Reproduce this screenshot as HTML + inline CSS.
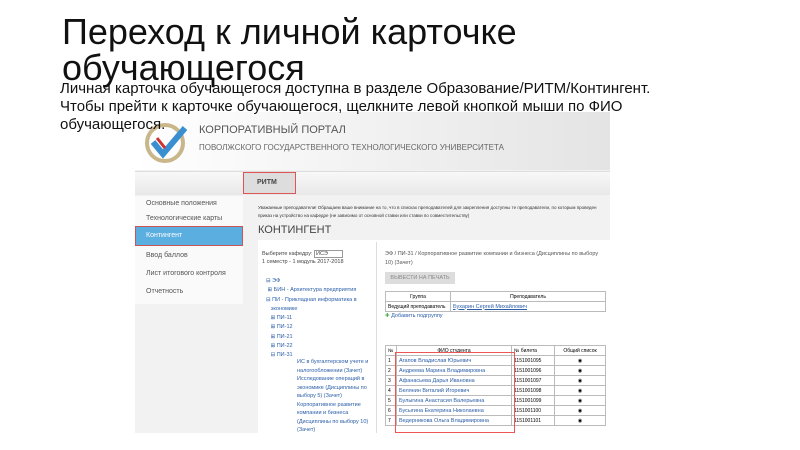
<!DOCTYPE html><html><head><meta charset="utf-8"><style>
body{margin:0;width:800px;height:450px;background:#fff;position:relative;overflow:hidden;font-family:"Liberation Sans",sans-serif}
.a{position:absolute}
.t{font-size:36px;color:#111;line-height:36px;left:62px;top:14px}
.p{font-size:15px;color:#111;line-height:18px;left:60px;top:80px;z-index:2}
.s{font-size:7px;color:#555}
.l{color:#2a5ea8;font-size:5.5px}
table{border-collapse:collapse;font-size:5px}
td{border:1px solid #bbb;height:9px;padding:0 2px;white-space:nowrap}
</style></head><body>
<div class="a" style="left:135px;top:112px;width:475px;height:321px;background:#f2f2f2"></div>
<div class="a" style="left:135px;top:112px;width:475px;height:58px;background:linear-gradient(90deg,#fff,#e4e4e4)"></div>
<svg class="a" style="left:143px;top:120px" width="46" height="46"><circle cx="22" cy="23" r="18" fill="none" stroke="#c9b68a" stroke-width="4"/><path d="M10 22 L20 34 L42 8" fill="none" stroke="#3a8fd0" stroke-width="6"/><path d="M14 18 L22 28" stroke="#c33" stroke-width="3"/></svg>
<div class="a" style="left:199px;top:124px;font-size:11px;color:#555">КОРПОРАТИВНЫЙ ПОРТАЛ</div>
<div class="a" style="left:199px;top:143px;font-size:8px;color:#666">ПОВОЛЖСКОГО ГОСУДАРСТВЕННОГО ТЕХНОЛОГИЧЕСКОГО УНИВЕРСИТЕТА</div>
<div class="a" style="left:135px;top:171px;width:475px;height:23px;background:linear-gradient(#f8f8f8,#e8e8e8);border-top:1px solid #ddd"></div>
<div class="a" style="left:243px;top:172px;width:51px;height:20px;background:#ddd;border:1px solid #d55;font-size:7px;font-weight:bold;color:#444;line-height:20px;text-indent:13px">РИТМ</div>
<div class="a" style="left:135px;top:196px;width:108px;height:108px;background:#fafafa"></div>
<div class="a s" style="left:146px;top:200px">Основные положения</div>
<div class="a s" style="left:146px;top:215px">Технологические карты</div>
<div class="a" style="left:135px;top:226px;width:106px;height:18px;background:#5aaee0;border:1px solid #c55"></div>
<div class="a s" style="left:146px;top:232px;color:#fff">Контингент</div>
<div class="a s" style="left:146px;top:252px">Ввод баллов</div>
<div class="a s" style="left:146px;top:270px">Лист итогового контроля</div>
<div class="a s" style="left:146px;top:288px">Отчетность</div>
<div class="a" style="left:258px;top:204px;font-size:4.5px;color:#333;width:350px;line-height:8px">Уважаемые преподаватели! Обращаем ваше внимание на то, что в списках преподавателей для закрепления доступны те преподаватели, по которым проведен приказ на устройство на кафедре (не зависимо от основной ставки или ставки по совместительству)</div>
<div class="a" style="left:258px;top:224px;font-size:11px;color:#444">КОНТИНГЕНТ</div>
<div class="a" style="left:258px;top:240px;width:352px;height:193px;background:#fff"></div>
<div class="a" style="left:376px;top:242px;width:1px;height:191px;background:#ddd"></div>
<div class="a l" style="left:262px;top:250px;color:#444;line-height:8px">Выберите кафедру: <span style="border:1px solid #999;padding:0 14px 0 1px">ИСЭ</span><br>1 семестр - 1 модуль 2017-2018</div>
<div class="a l" style="left:266px;top:277px;line-height:9.3px">⊟ ЭФ<br>&nbsp;⊞ БИН - Архитектура предприятия<br>⊟ ПИ - Прикладная информатика в<br>&nbsp;&nbsp;&nbsp;экономике<br>&nbsp;&nbsp;&nbsp;⊞ ПИ-11<br>&nbsp;&nbsp;&nbsp;⊞ ПИ-12<br>&nbsp;&nbsp;&nbsp;⊞ ПИ-21<br>&nbsp;&nbsp;&nbsp;⊞ ПИ-22<br>&nbsp;&nbsp;&nbsp;⊟ ПИ-31</div>
<div class="a l" style="left:297px;top:358px;line-height:8.5px;width:80px">ИС в бухгалтерском учете и налогообложении (Зачет)<br>Исследование операций в экономике (Дисциплины по выбору 5) (Зачет)<br>Корпоративное развитие компании и бизнеса (Дисциплины по выбору 10) (Зачет)</div>
<div class="a l" style="left:385px;top:250px;color:#555;width:220px;line-height:9px">ЭФ / ПИ-31 / Корпоративное развитие компании и бизнеса (Дисциплины по выбору 10) (Зачет)</div>
<div class="a" style="left:385px;top:272px;width:70px;height:12px;background:#ddd;font-size:5.5px;color:#888;line-height:12px;text-align:center">ВЫВЕСТИ НА ПЕЧАТЬ</div>
<table class="a" style="left:385px;top:291px;width:221px"><tr><td style="width:60px;text-align:center">Группа</td><td style="text-align:center">Преподаватель</td></tr><tr><td>Ведущий преподаватель</td><td class="l"><u>Бухарин Сергей Михайлович</u></td></tr></table>
<div class="a l" style="left:385px;top:313px"><span style="color:#4a4">✚</span> Добавить подгруппу</div>
<table class="a" style="left:385px;top:345px;width:221px"><tr><td style="width:6px">№</td><td style="text-align:center;width:110px">ФИО студента</td><td>№ билета</td><td style="text-align:center">Общий список</td></tr>
<tr><td>1</td><td class="l">Агапов Владислав Юрьевич</td><td>1151001095</td><td style="text-align:center">◉</td></tr>
<tr><td>2</td><td class="l">Андреева Марина Владимировна</td><td>1151001096</td><td style="text-align:center">◉</td></tr>
<tr><td>3</td><td class="l">Афанасьева Дарья Ивановна</td><td>1151001097</td><td style="text-align:center">◉</td></tr>
<tr><td>4</td><td class="l">Белянин Виталий Игоревич</td><td>1151001098</td><td style="text-align:center">◉</td></tr>
<tr><td>5</td><td class="l">Булыгина Анастасия Валерьевна</td><td>1151001099</td><td style="text-align:center">◉</td></tr>
<tr><td>6</td><td class="l">Бусыгина Екатерина Николаевна</td><td>1151001100</td><td style="text-align:center">◉</td></tr>
<tr><td>7</td><td class="l">Ведерникова Ольга Владимировна</td><td>1151001101</td><td style="text-align:center">◉</td></tr></table>
<div class="a" style="left:395px;top:352px;width:118px;height:79px;border:1px solid #e55"></div>
<div class="a t">Переход к личной карточке<br>обучающегося</div>
<div class="a p">Личная карточка обучающегося доступна в разделе Образование/РИТМ/Контингент.<br>Чтобы прейти к карточке обучающегося, щелкните левой кнопкой мыши по ФИО<br>обучающегося.</div>
</body></html>
